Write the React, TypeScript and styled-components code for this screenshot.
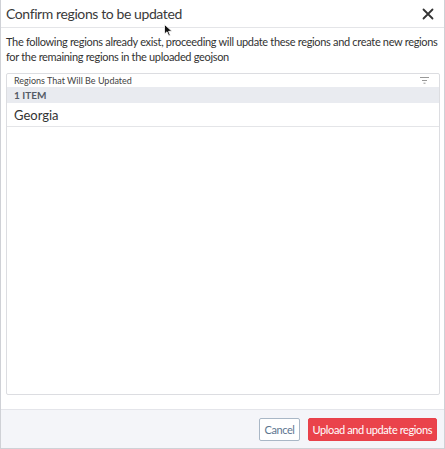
import React from "react";
import styled, { createGlobalStyle } from "styled-components";

const Global = createGlobalStyle`
  html, body { margin: 0; padding: 0; background: #fff; }
  body { font-family: "Source Sans Pro", Lato, "Noto Sans", sans-serif; color: #333; }
  * { box-sizing: border-box; }
`;

const Dialog = styled.div`
  position: relative;
  width: 445px;
  height: 449px;
  border: 1px solid #cfd1d6;
  border-top: none;
  display: flex;
  flex-direction: column;
  background: #fff;
`;

const Header = styled.div`
  height: 28px;
  display: flex;
  align-items: center;
  justify-content: space-between;
  padding: 0 10px 0 5px;
  border-bottom: 1px solid #e4e5e8;
`;

const Title = styled.div`
  font-size: 14px;
  color: #3a3a3a;
  letter-spacing: -0.4px;
`;

const Close = styled.button`
  border: none;
  background: none;
  padding: 0;
  display: flex;
  color: #333;
`;

const Body = styled.div`
  flex: 1;
  display: flex;
  flex-direction: column;
  padding: 6px 4px 14px 5px;
`;

const Description = styled.p`
  margin: 0 0 9px;
  font-size: 11px;
  line-height: 15px;
  letter-spacing: -0.32px;
  color: #333;
`;

const Table = styled.div`
  flex: 1;
  border: 1px solid #dcdde1;
  border-radius: 2px;
  display: flex;
  flex-direction: column;
`;

const ColumnHeader = styled.div`
  height: 13px;
  display: flex;
  align-items: center;
  justify-content: space-between;
  padding: 0 10px 0 7px;
  font-size: 9px;
  color: #444;
`;

const GroupRow = styled.div`
  height: 16px;
  display: flex;
  align-items: center;
  padding: 0 7px;
  background: #e9ebf0;
  font-size: 10px;
  font-weight: 700;
  color: #555b66;
`;

const Row = styled.div`
  height: 24px;
  display: flex;
  align-items: center;
  padding: 0 7px;
  border-bottom: 1px solid #e4e5e8;
  font-size: 13px;
  color: #333;
`;

const Footer = styled.div`
  height: 39px;
  background: #f4f5f9;
  border-top: 1px solid #e4e5ea;
  display: flex;
  align-items: center;
  justify-content: flex-end;
  gap: 8px;
  padding-right: 7px;
`;

const Button = styled.button<{ $primary?: boolean }>`
  height: 23px;
  padding: 0 ${(p) => (p.$primary ? "4px" : "4px")};
  border-radius: 2px;
  font-family: inherit;
  font-size: 11px;
  letter-spacing: -0.4px;
  border: 1px solid ${(p) => (p.$primary ? "#e8414a" : "#a9b7c6")};
  background: ${(p) => (p.$primary ? "#ea434b" : "#fff")};
  color: ${(p) => (p.$primary ? "#fff" : "#5d7590")};
`;

const Cursor = styled.svg`
  position: absolute;
  left: 163px;
  top: 24px;
`;

export default function App() {
  return (
    <>
      <Global />
      <Dialog>
        <Header>
          <Title>Confirm regions to be updated</Title>
          <Close aria-label="Close">
            <svg width="12" height="12" viewBox="0 0 12 12">
              <path d="M1.5 1.5 L10.5 10.5 M10.5 1.5 L1.5 10.5" stroke="#333" strokeWidth="1.8" strokeLinecap="round" />
            </svg>
          </Close>
        </Header>
        <Body>
          <Description>
            The following regions already exist, proceeding will update these regions and create new regions for the remaining regions in the uploaded geojson
          </Description>
          <Table>
            <ColumnHeader>
              <span>Regions That Will Be Updated</span>
              <svg width="9" height="7" viewBox="0 0 9 7">
                <path d="M0 0.5 H9 M2 3.5 H7 M3.5 6.2 H5.5" stroke="#999" strokeWidth="1" />
              </svg>
            </ColumnHeader>
            <GroupRow>1 ITEM</GroupRow>
            <Row>Georgia</Row>
          </Table>
        </Body>
        <Footer>
          <Button>Cancel</Button>
          <Button $primary>Upload and update regions</Button>
        </Footer>
        <Cursor width="9" height="13" viewBox="0 0 9 13">
          <path d="M0.5 0.5 L0.5 10 L3 7.8 L4.8 12 L6.3 11.3 L4.6 7.3 L8 7.3 Z" fill="#111" stroke="#fff" strokeWidth="0.8" />
        </Cursor>
      </Dialog>
    </>
  );
}
